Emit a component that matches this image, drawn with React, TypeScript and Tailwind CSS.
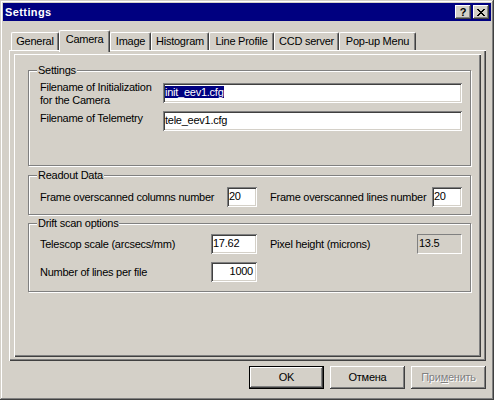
import React from "react";

const raisedBtn =
  "shadow-[inset_-1px_-1px_#404040,inset_1px_1px_#ffffff,inset_-2px_-2px_#808080,inset_2px_2px_#d4d0c8]";
const field =
  "bg-white h-[20px] pl-[2px] pt-[3px] whitespace-nowrap overflow-hidden shadow-[inset_1px_1px_#808080,inset_-1px_-1px_#ffffff,inset_2px_2px_#404040,inset_-2px_-2px_#d4d0c8]";

function Group({
  label,
  className,
  children,
}: {
  label: string;
  className: string;
  children?: React.ReactNode;
}) {
  return (
    <div
      className={
        "relative shrink-0 w-[443px] border border-[#808080] shadow-[1px_1px_0_#ffffff,inset_1px_1px_0_#ffffff] " +
        className
      }
    >
      <span className="absolute left-[8px] top-[-7px] px-[1px] bg-[#d4d0c8]">{label}</span>
      {children}
    </div>
  );
}

const tabs = [
  { label: "General", cls: "w-[48px]" },
  { label: "Camera", cls: "w-[51px]", sel: true },
  { label: "Image", cls: "w-[41px]" },
  { label: "Histogram", cls: "w-[58px]" },
  { label: "Line Profile", cls: "w-[65px]" },
  { label: "CCD server", cls: "w-[65px]" },
  { label: "Pop-up Menu", cls: "w-[77px]" },
];

export default function App() {
  return (
    <div className="w-[494px] h-[400px] bg-[#d4d0c8] p-[3px] flex flex-col font-['Liberation_Sans',Arial,sans-serif] text-[11px] leading-[13px] text-black tracking-[-0.25px] shadow-[inset_-1px_-1px_#404040,inset_1px_1px_#d4d0c8,inset_-2px_-2px_#808080,inset_2px_2px_#ffffff]">
      {/* Title bar */}
      <div className="h-[18px] shrink-0 bg-[#000080] flex items-center pl-[2px] pr-[2px]">
        <span className="flex-1 text-white font-bold text-[11px] tracking-[0.4px]">Settings</span>
        <div
          className={
            "w-[16px] h-[14px] bg-[#d4d0c8] flex items-center justify-center font-bold text-[11px] leading-[11px] tracking-normal " +
            raisedBtn
          }
        >
          ?
        </div>
        <div
          className={
            "ml-[2px] w-[16px] h-[14px] bg-[#d4d0c8] flex items-center justify-center " + raisedBtn
          }
        >
          <svg width="8" height="7" viewBox="0 0 8 7" shapeRendering="crispEdges">
            <g fill="#000">
              <rect x="0" y="0" width="2" height="1" />
              <rect x="6" y="0" width="2" height="1" />
              <rect x="1" y="1" width="2" height="1" />
              <rect x="5" y="1" width="2" height="1" />
              <rect x="2" y="2" width="4" height="1" />
              <rect x="3" y="3" width="2" height="1" />
              <rect x="2" y="4" width="4" height="1" />
              <rect x="1" y="5" width="2" height="1" />
              <rect x="5" y="5" width="2" height="1" />
              <rect x="0" y="6" width="2" height="1" />
              <rect x="6" y="6" width="2" height="1" />
            </g>
          </svg>
        </div>
      </div>

      {/* Tabs */}
      <div className="flex items-end h-[20px] mt-[9px] ml-[8px] shrink-0">
        {tabs.map((t) =>
          t.sel ? (
            <div
              key={t.label}
              className={
                "relative z-10 h-[22px] mb-[-2px] bg-[#d4d0c8] border-t border-l border-white border-r border-r-[#404040] rounded-t-[2px] shadow-[inset_-1px_0_#808080] flex items-start justify-center pt-[2px] " +
                t.cls
              }
            >
              {t.label}
            </div>
          ) : (
            <div
              key={t.label}
              className={
                "h-[18px] border-t border-l border-white border-r border-r-[#404040] rounded-t-[2px] shadow-[inset_-1px_0_#808080] flex items-start justify-center pt-[2px] " +
                t.cls
              }
            >
              {t.label}
            </div>
          )
        )}
      </div>

      {/* Tab panel */}
      <div className="ml-[6px] w-[477px] h-[311px] shrink-0 pt-[4px] pl-[5px] shadow-[inset_1px_1px_#ffffff,inset_-1px_-1px_#404040,inset_-2px_-2px_#808080]">
        <div className="w-[467px] h-[303px] pl-[14px] pt-[16px] flex flex-col shadow-[inset_1px_1px_#ffffff,inset_-1px_-1px_#404040,inset_-2px_-2px_#808080]">
          {/* Settings */}
          <Group label="Settings" className="h-[96px] pl-[11px] pt-[10px]">
            <div className="flex items-start">
              <div className="w-[123px] shrink-0">
                Filename of Initialization
                <br />
                for the Camera
              </div>
              <div className={"w-[299px] mt-[2px] " + field}>
                <span className="bg-[#000080] text-white">init_eev1.cfg</span>
              </div>
            </div>
            <div className="flex items-start mt-[4px]">
              <div className="w-[123px] shrink-0 mt-[1px]">Filename of Telemetry</div>
              <div className={"w-[299px] " + field}>tele_eev1.cfg</div>
            </div>
          </Group>

          {/* Readout Data */}
          <Group label="Readout Data" className="h-[40px] mt-[9px] pl-[11px] pt-[11px]">
            <div className="flex items-start">
              <div className="w-[187px] shrink-0 mt-[4px]">Frame overscanned columns number</div>
              <div className={"w-[30px] shrink-0 " + field}>20</div>
              <div className="w-[162px] shrink-0 ml-[13px] mt-[4px]">Frame overscanned lines number</div>
              <div className={"w-[30px] shrink-0 " + field}>20</div>
            </div>
          </Group>

          {/* Drift scan options */}
          <Group label="Drift scan options" className="h-[69px] mt-[8px] pl-[11px] pt-[10px]">
            <div className="flex items-start">
              <div className="w-[171px] shrink-0 mt-[4px]">Telescop scale (arcsecs/mm)</div>
              <div className={"w-[46px] shrink-0 " + field}>17.62</div>
              <div className="w-[147px] shrink-0 ml-[13px] mt-[4px]">Pixel height (microns)</div>
              <div className="w-[45px] h-[20px] shrink-0 pl-[1px] pt-[2px] border border-t-[#808080] border-l-[#808080] border-r-white border-b-white">
                13.5
              </div>
            </div>
            <div className="flex items-start mt-[8px]">
              <div className="w-[171px] shrink-0 mt-[4px]">Number of lines per file</div>
              <div className={"w-[46px] shrink-0 text-right pr-[4px] " + field}>1000</div>
            </div>
          </Group>
        </div>
      </div>

      {/* Buttons */}
      <div className="flex justify-end gap-[6px] pr-[5px] mt-[5px] shrink-0">
        <div className="w-[75px] h-[23px] border border-black flex items-center justify-center shadow-[inset_-1px_-1px_#404040,inset_1px_1px_#ffffff,inset_-2px_-2px_#808080]">
          OK
        </div>
        <div className={"w-[75px] h-[23px] flex items-center justify-center " + raisedBtn}>Отмена</div>
        <div
          className={
            "w-[75px] h-[23px] flex items-center justify-center text-[#808080] [text-shadow:1px_1px_0_#ffffff] " +
            raisedBtn
          }
        >
          <span>
            При<span className="underline">м</span>енить
          </span>
        </div>
      </div>
    </div>
  );
}
